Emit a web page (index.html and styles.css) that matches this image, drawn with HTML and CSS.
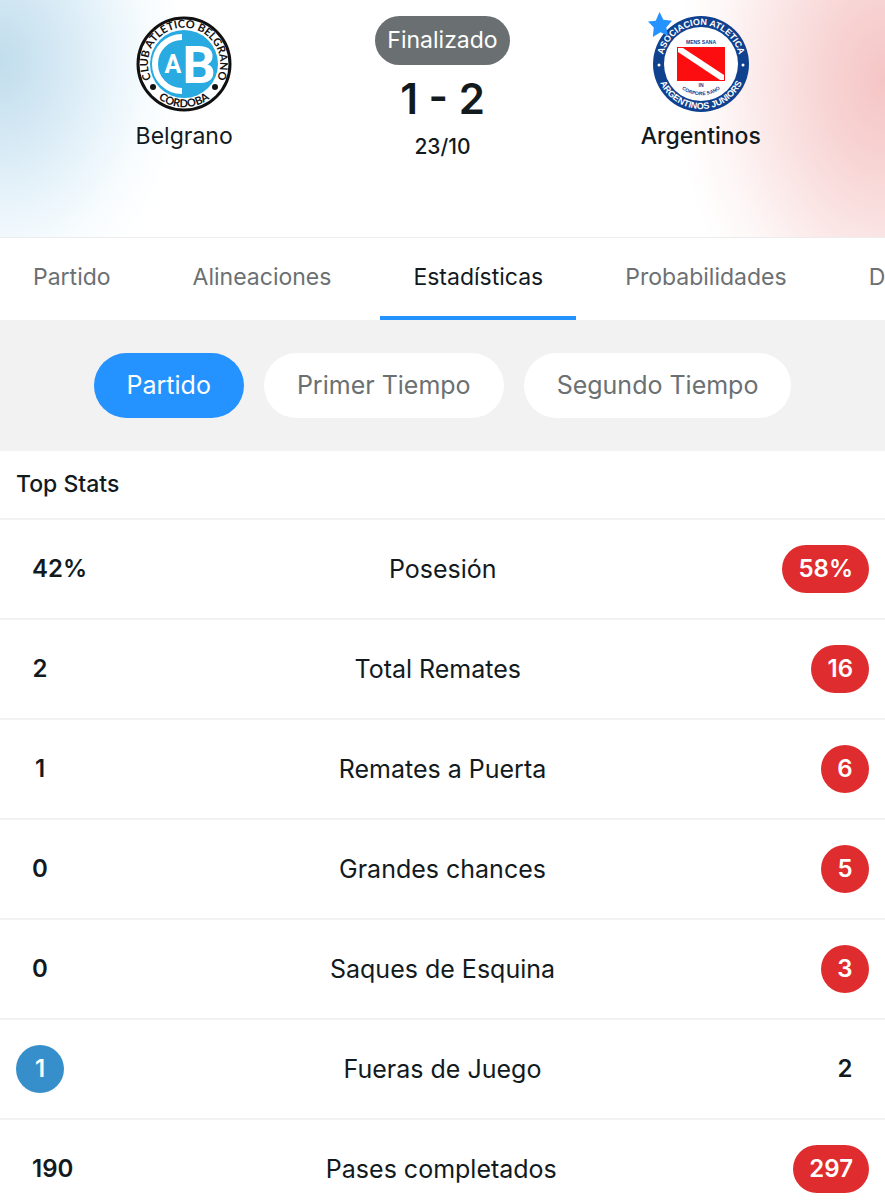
FILE: index.html
```html
<!DOCTYPE html>
<html lang="es">
<head>
  <meta charset="UTF-8">
  <meta name="viewport" content="width=device-width, initial-scale=1.0">
  <title>Belgrano 1 - 2 Argentinos</title>
  <link rel="stylesheet" href="styles.css">
</head>
<body>
  <!-- Match header -->
  <header class="match">
    <div class="team">
      <div class="crest">
        <svg viewBox="0 0 96 96" role="img" aria-label="Club Atlético Belgrano">
          <defs>
            <path id="belTop" d="M17 66 A36 36 0 1 1 79 66"/>
            <path id="belBottom" d="M8 64 A43 43 0 0 0 88 64"/>
          </defs>
          <circle cx="48" cy="48" r="46" fill="#fff" stroke="#111" stroke-width="3"/>
          <circle cx="48" cy="48" r="34" fill="#29abe2"/>
          <path d="M46 21 A27 27 0 0 0 46 75" fill="none" stroke="#fff" stroke-width="6"/>
          <text class="bel-a" x="37" y="57">A</text>
          <text class="bel-b" x="63" y="67">B</text>
          <text class="bel-ring"><textPath href="#belTop" startOffset="50%">CLUB ATLETICO BELGRANO</textPath></text>
          <text class="bel-ring"><textPath href="#belBottom" startOffset="50%">CORDOBA</textPath></text>
          <circle cx="17" cy="71" r="3" fill="#111"/>
          <circle cx="79" cy="71" r="3" fill="#111"/>
        </svg>
      </div>
      <span class="team-name">Belgrano</span>
    </div>

    <div class="result">
      <span class="status">Finalizado</span>
      <span class="score">1 - 2</span>
      <span class="date">23/10</span>
    </div>

    <div class="team winner">
      <div class="crest">
        <svg viewBox="0 0 96 96" role="img" aria-label="Asociación Atlética Argentinos Juniors">
          <defs>
            <path id="argTop" d="M9 48 A39 39 0 0 1 87 48"/>
            <path id="argBottom" d="M3 48 A45 45 0 0 0 93 48"/>
            <path id="argMotto" d="M22 66 A32 32 0 0 0 74 66"/>
          </defs>
          <circle cx="48" cy="48" r="48" fill="#10418f"/>
          <circle cx="48" cy="48" r="37" fill="#fff"/>
          <rect x="24" y="31" width="48" height="34" fill="#fb0d10"/>
          <path d="M25 32 H30 L71 59 V64 H67 L25 36 Z" fill="#fff"/>
          <text class="arg-motto" x="48" y="28">MENS SANA</text>
          <text class="arg-motto" x="48" y="71">IN</text>
          <text class="arg-motto"><textPath href="#argMotto" startOffset="50%">CORPORE SANO</textPath></text>
          <text class="arg-ring"><textPath href="#argTop" startOffset="50%">ASOCIACION ATLETICA</textPath></text>
          <text class="arg-ring"><textPath href="#argBottom" startOffset="50%">ARGENTINOS JUNIORS</textPath></text>
          <circle cx="6" cy="49" r="1.5" fill="#fff"/>
          <circle cx="90" cy="49" r="1.5" fill="#fff"/>
        </svg>
        <svg class="star" viewBox="0 0 26 26" aria-hidden="true">
          <path d="M12 0 L16 8 L25 9 L19 16 L21 25 L13 21 L5 26 L6 16 L0 10 L8 9 Z" fill="#2492ff"/>
        </svg>
      </div>
      <span class="team-name">Argentinos</span>
    </div>
  </header>

  <!-- Tabs -->
  <nav class="tabs">
    <a href="#partido" class="tab">Partido</a>
    <a href="#alineaciones" class="tab">Alineaciones</a>
    <a href="#estadisticas" class="tab active">Estadísticas</a>
    <a href="#probabilidades" class="tab">Probabilidades</a>
    <a href="#d" class="tab">D</a>
  </nav>

  <main>
    <!-- Period filter -->
    <div class="periods">
      <button type="button" class="period active">Partido</button>
      <button type="button" class="period">Primer Tiempo</button>
      <button type="button" class="period">Segundo Tiempo</button>
    </div>

    <h2 class="section-title">Top Stats</h2>
    <table class="stats">
      <tbody>
        <tr>
          <td class="value">42%</td>
          <th scope="row">Posesión</th>
          <td class="value away">58%</td>
        </tr>
        <tr>
          <td class="value">2</td>
          <th scope="row">Total Remates</th>
          <td class="value away">16</td>
        </tr>
        <tr>
          <td class="value">1</td>
          <th scope="row">Remates a Puerta</th>
          <td class="value away">6</td>
        </tr>
        <tr>
          <td class="value">0</td>
          <th scope="row">Grandes chances</th>
          <td class="value away">5</td>
        </tr>
        <tr>
          <td class="value">0</td>
          <th scope="row">Saques de Esquina</th>
          <td class="value away">3</td>
        </tr>
        <tr>
          <td class="value home">1</td>
          <th scope="row">Fueras de Juego</th>
          <td class="value">2</td>
        </tr>
        <tr>
          <td class="value">190</td>
          <th scope="row">Pases completados</th>
          <td class="value away">297</td>
        </tr>
      </tbody>
    </table>
  </main>
</body>
</html>
```
FILE: styles.css
```css
* {
  box-sizing: border-box;
}
body {
  font-family: Inter, "Liberation Sans", Arial, sans-serif;
  margin: 0;
  background-color: #fff;
  color: #121a1e;
  overflow-x: hidden;
}

/* Match header */
.match {
  display: grid;
  grid-template-columns: 1fr 1fr 1fr;
  min-height: 238px;
  padding: 16px 55px;
  border-bottom: 1px solid #ececec;
  background:
    radial-gradient(ellipse 190px 250px at 0 60px, #c1ddec, #d4e8f4 30%, #eaf5fb 60%, #f8fcfe 80%, transparent),
    radial-gradient(ellipse 210px 300px at 100% 80px, #f5c5c5, #f8d5d5 30%, #fbe6e6 55%, #fef7f7 80%, transparent);
}
.team,
.result {
  display: flex;
  flex-direction: column;
  align-items: center;
}
.crest {
  position: relative;
  width: 96px;
  height: 96px;
}
.crest svg {
  display: block;
}
.crest .star {
  position: absolute;
  top: -4px;
  left: -5px;
  width: 25px;
}
.team-name {
  margin-top: 8px;
  font-size: 23px;
  line-height: 32px;
}
.winner .team-name {
  font-weight: 500;
}
.status {
  padding: 0 12px;
  border-radius: 25px;
  background-color: #6a7072;
  color: #fff;
  font-size: 23px;
  line-height: 49px;
}
.score {
  margin-top: 8px;
  font-size: 42px;
  font-weight: 600;
  line-height: 52px;
}
.date {
  margin-top: 6px;
  font-size: 21px;
  font-weight: 500;
  line-height: 32px;
}

/* Lettering inside the crests */
.crest text {
  font-weight: 700;
  text-anchor: middle;
}
.bel-ring {
  font-family: Lato, sans-serif;
  font-size: 11px;
  fill: #111;
}
.bel-a,
.bel-b {
  font-family: Roboto, sans-serif;
  fill: #fff;
}
.bel-a {
  font-size: 25px;
}
.bel-b {
  font-size: 52px;
}
.arg-ring {
  font-family: "Liberation Sans", Arial, sans-serif;
  font-size: 9px;
  fill: #fff;
}
.arg-motto {
  font-family: "Liberation Sans", Arial, sans-serif;
  font-size: 5px;
  fill: #10418f;
}

/* Tabs */
.tabs {
  display: flex;
  gap: 16px;
  overflow: hidden;
}
.tab {
  flex: none;
  padding: 0 33px;
  border-bottom: 4px solid transparent;
  color: #6b7072;
  font-size: 23px;
  line-height: 78px;
  text-decoration: none;
}
.tab.active {
  border-color: #2492ff;
  color: #121a1e;
}

/* Period filter */
.periods {
  display: flex;
  justify-content: center;
  gap: 20px;
  padding: 33px 16px;
  background-color: #f2f2f2;
}
.period {
  padding: 0 33px;
  border: none;
  border-radius: 33px;
  background-color: #fff;
  color: #6b7072;
  font-family: inherit;
  font-size: 25px;
  line-height: 65px;
  cursor: pointer;
}
.period.active {
  background-color: #2492ff;
  color: #fff;
}

/* Stats */
.section-title {
  margin: 0;
  padding: 0 16px;
  font-size: 23px;
  font-weight: 500;
  line-height: 67px;
}
.stats,
.stats tbody {
  display: block;
}
.stats tr {
  display: flex;
  justify-content: space-between;
  align-items: center;
  height: 100px;
  padding: 0 16px;
  border-top: 2px solid #f2f2f2;
}
.stats th {
  padding: 0;
  font-size: 25px;
  font-weight: 400;
}
.value {
  min-width: 48px;
  padding: 0 16px;
  border-radius: 24px;
  font-size: 24px;
  font-weight: 600;
  line-height: 48px;
  text-align: center;
}
.value.home {
  background-color: #368fca;
  color: #fff;
}
.value.away {
  background-color: #df2d2f;
  color: #fff;
}
```
